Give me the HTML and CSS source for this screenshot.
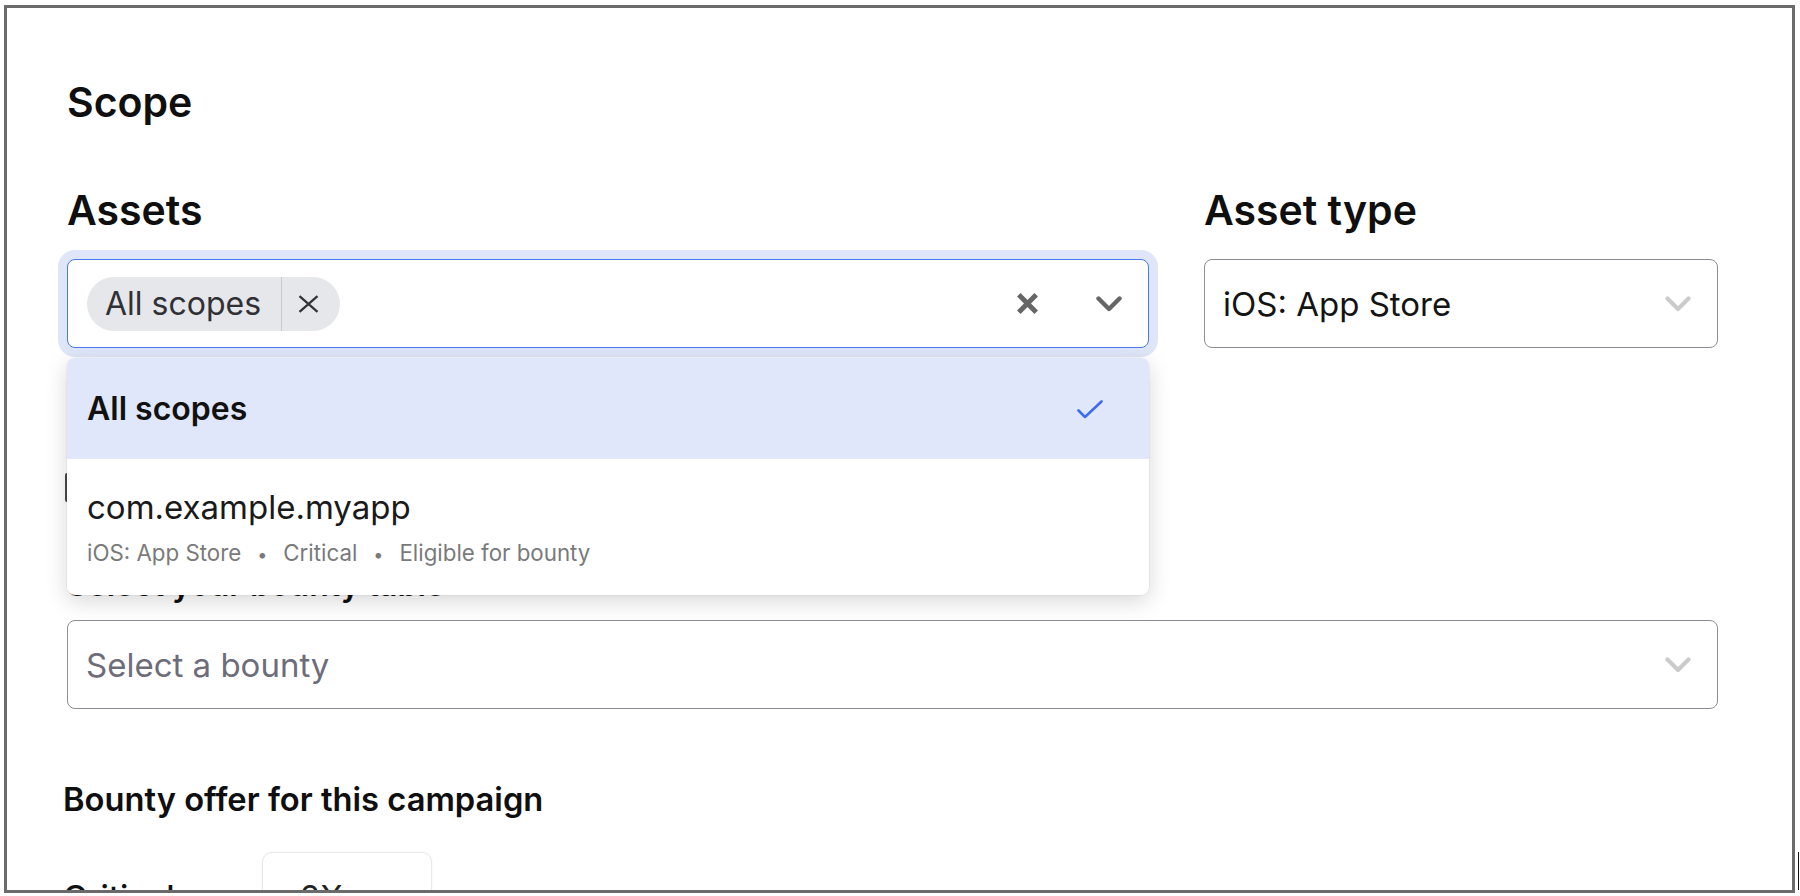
FILE: index.html
```html
<!DOCTYPE html>
<html lang="en">
<head>
<meta charset="utf-8">
<title>Scope</title>
<link rel="stylesheet" href="styles.css">
</head>
<body>
<div class="frame">
  <div class="content">
    <h1 class="section-title">Scope</h1>

    <div class="field-row">
      <div class="field">
        <div class="field-label">Assets</div>
        <div class="combo">
          <div class="control is-focused">
            <div class="values">
              <span class="chip">
                <span class="chip-text">All scopes</span>
                <span class="chip-remove">
                  <svg width="21" height="18" viewBox="0 0 21 18"><path d="M1.5 1.2 L19.5 16.8 M19.5 1.2 L1.5 16.8" stroke="#333338" stroke-width="2.3" fill="none"/></svg>
                </span>
              </span>
            </div>
            <div class="indicators">
              <span class="clear-icon">
                <svg width="23" height="23" viewBox="0 0 23 23"><path d="M2.8 2.8 L20.2 20.2 M20.2 2.8 L2.8 20.2" stroke="#666666" stroke-width="5" fill="none"/></svg>
              </span>
              <span class="caret-icon">
                <svg width="26" height="16" viewBox="0 0 26 16"><polyline points="2.5,2.5 13,13 23.5,2.5" stroke="#666666" stroke-width="4.4" stroke-linecap="round" stroke-linejoin="round" fill="none"/></svg>
              </span>
            </div>
          </div>

          <div class="menu">
            <div class="option is-selected">
              <span class="option-title">All scopes</span>
              <svg class="check" width="26" height="19" viewBox="0 0 26 19"><polyline points="1.5,10.5 8,17 24.5,1.5" stroke="#3d6cf0" stroke-width="2.6" stroke-linecap="round" stroke-linejoin="round" fill="none"/></svg>
            </div>
            <div class="option">
              <div class="option-name">com.example.myapp</div>
              <div class="option-meta">iOS: App Store<span class="dot">•</span>Critical<span class="dot">•</span>Eligible for bounty</div>
            </div>
          </div>
        </div>
      </div>

      <div class="field">
        <div class="field-label">Asset type</div>
        <div class="control">
          <span class="value">iOS: App Store</span>
          <span class="caret-icon">
            <svg width="26" height="16" viewBox="0 0 26 16"><polyline points="2.5,2.5 13,13 23.5,2.5" stroke="#cbcbcb" stroke-width="4.2" stroke-linecap="round" stroke-linejoin="round" fill="none"/></svg>
          </span>
        </div>
      </div>
    </div>

    <div class="check-row">
      <span class="checkbox"></span>
    </div>

    <div class="field-label small">Select your bounty table</div>
    <div class="control">
      <span class="placeholder">Select a bounty</span>
      <span class="caret-icon">
        <svg width="26" height="16" viewBox="0 0 26 16"><polyline points="2.5,2.5 13,13 23.5,2.5" stroke="#cbcbcb" stroke-width="4.2" stroke-linecap="round" stroke-linejoin="round" fill="none"/></svg>
      </span>
    </div>

    <h2 class="subhead">Bounty offer for this campaign</h2>

    <div class="offer-row">
      <span class="offer-label">Critical</span>
      <div class="offer-input">2X</div>
    </div>
  </div>
</div>
</body>
</html>
```

FILE: styles.css
```css
html, body {
  margin: 0;
  padding: 0;
  background: #ffffff;
}

body {
  position: relative;
  width: 1800px;
  height: 896px;
  overflow: hidden;
  font-family: "Inter", "Liberation Sans", sans-serif;
  color: #111111;
}

/* stray capture edge mark at the bottom-right corner */
body::after {
  content: "";
  position: absolute;
  left: 1798px;
  top: 852px;
  width: 1px;
  height: 38px;
  background: #111111;
}

.frame {
  box-sizing: border-box;
  margin: 5px 0 0 4px;
  width: 1791px;
  height: 888px;
  border: 3px solid #6b6b6b;
  overflow: hidden;
  background: #ffffff;
}

.content {
  padding: 70px 74px 0 60px;
}

.section-title {
  margin: 0;
  font-size: 41px;
  line-height: 48px;
  font-weight: 600;
  color: #0f0f10;
}

.field-row {
  display: grid;
  grid-template-columns: 1082px 1fr;
  column-gap: 55px;
  margin-top: 60px;
}

.field-label {
  font-size: 41px;
  line-height: 48px;
  font-weight: 600;
  color: #0f0f10;
  margin-bottom: 25px;
}

.field-label.small {
  font-size: 32px;
  line-height: 40px;
  margin-top: 63px;
  margin-bottom: 15px;
}

.combo {
  position: relative;
}

.control {
  box-sizing: border-box;
  height: 89px;
  display: flex;
  align-items: center;
  justify-content: space-between;
  padding: 0 26px 0 18px;
  border: 1px solid #8d8d95;
  border-radius: 8px;
  background: #ffffff;
  font-size: 33px;
  line-height: 40px;
}

.control.is-focused {
  border-color: #4a78ef;
  box-shadow: 0 0 0 9px #e0e6fa;
  padding-left: 19px;
}

.values {
  display: flex;
  align-items: center;
}

.chip {
  display: flex;
  align-items: stretch;
  height: 54px;
  border-radius: 27px;
  background: #e6e7eb;
  color: #303035;
}

.chip-text {
  display: flex;
  align-items: center;
  padding: 0 20px 0 18px;
  border-right: 1px solid #c9c9ce;
  font-size: 32px;
}

.chip-remove {
  display: flex;
  align-items: center;
  padding: 0 21px 0 16px;
}

.chip-remove svg,
.clear-icon svg,
.caret-icon svg,
.check {
  display: block;
}

.indicators {
  display: flex;
  align-items: center;
}

.clear-icon {
  margin-right: 57px;
}

.value {
  color: #141414;
}

.placeholder {
  color: #6d6d7a;
}

.menu {
  position: absolute;
  top: calc(100% + 10px);
  left: 0;
  right: 0;
  z-index: 10;
  background: #ffffff;
  border-radius: 8px;
  overflow: hidden;
  box-shadow: 0 6px 22px rgba(0, 0, 0, 0.16), 0 0 0 1px rgba(0, 0, 0, 0.03);
}

.option {
  padding: 28px 20px 25px 20px;
}

.option.is-selected {
  display: flex;
  align-items: center;
  justify-content: space-between;
  padding: 31px 46px 30px 20px;
  background: #e1e7fa;
}

.option-title {
  font-size: 32px;
  line-height: 40px;
  font-weight: 600;
  color: #111111;
}

.option-name {
  font-size: 33px;
  line-height: 40px;
  color: #1a1a1a;
}

.option-meta {
  margin-top: 11px;
  font-size: 22.3px;
  line-height: 30px;
  color: #7a7a7a;
}

.dot {
  margin: 0 16px;
  font-size: 18px;
}

.check-row {
  display: flex;
  align-items: center;
  margin-top: 125px;
  height: 29px;
}

.checkbox {
  box-sizing: border-box;
  width: 29px;
  height: 29px;
  margin-left: -2px;
  border: 2px solid #4a4a4a;
  border-radius: 2px;
}

.subhead {
  margin: 70px 0 0 -4px;
  font-size: 32.7px;
  line-height: 40px;
  font-weight: 600;
  color: #0f0f10;
}

.offer-row {
  display: flex;
  align-items: center;
  margin: 33px 0 0 -4px;
}

.offer-label {
  width: 199px;
  font-size: 33px;
  line-height: 40px;
  font-weight: 500;
  color: #111111;
}

.offer-input {
  box-sizing: border-box;
  width: 170px;
  height: 89px;
  display: flex;
  align-items: center;
  padding-left: 37px;
  border: 1px solid #e8e8e8;
  border-radius: 10px;
  box-shadow: 0 0 3px rgba(0, 0, 0, 0.05);
  font-size: 33px;
  color: #222222;
}
```
